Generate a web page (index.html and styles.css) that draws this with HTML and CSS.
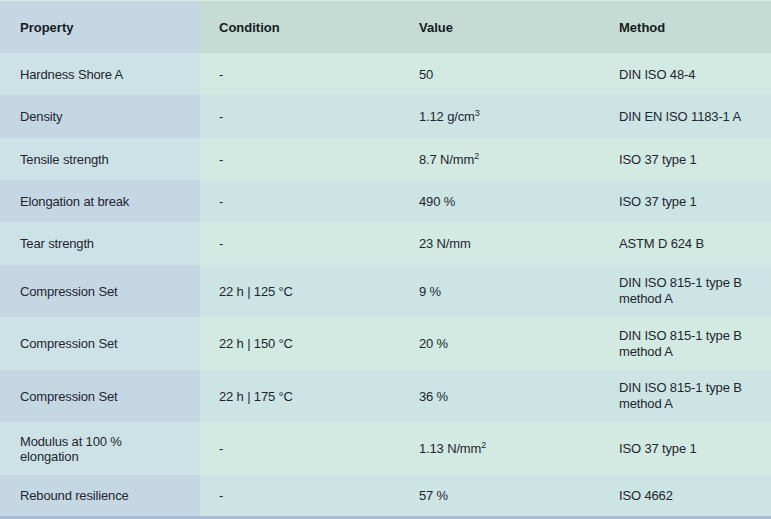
FILE: index.html
```html
<!DOCTYPE html>
<html lang="en">
<head>
<meta charset="utf-8">
<title>Properties</title>
<link rel="stylesheet" href="styles.css">
</head>
<body>
<table class="props">
  <colgroup>
    <col class="c1"><col class="c2"><col class="c3"><col class="c4">
  </colgroup>
  <thead>
    <tr class="head">
      <th>Property</th><th>Condition</th><th>Value</th><th>Method</th>
    </tr>
  </thead>
  <tbody>
    <tr class="odd r42"><td>Hardness Shore A</td><td>-</td><td>50</td><td>DIN ISO 48-4</td></tr>
    <tr class="even r43"><td>Density</td><td>-</td><td>1.12 g/cm<sup>3</sup></td><td>DIN EN ISO 1183-1 A</td></tr>
    <tr class="odd r42"><td>Tensile strength</td><td>-</td><td>8.7 N/mm<sup>2</sup></td><td>ISO 37 type 1</td></tr>
    <tr class="even r42"><td>Elongation at break</td><td>-</td><td>490 %</td><td>ISO 37 type 1</td></tr>
    <tr class="odd r43"><td>Tear strength</td><td>-</td><td>23 N/mm</td><td>ASTM D 624 B</td></tr>
    <tr class="even r52"><td>Compression Set</td><td>22 h | 125 °C</td><td>9 %</td><td class="two">DIN ISO 815-1 type B<br>method A</td></tr>
    <tr class="odd r53"><td>Compression Set</td><td>22 h | 150 °C</td><td>20 %</td><td class="two">DIN ISO 815-1 type B<br>method A</td></tr>
    <tr class="even r52"><td>Compression Set</td><td>22 h | 175 °C</td><td>36 %</td><td class="two">DIN ISO 815-1 type B<br>method A</td></tr>
    <tr class="odd r53"><td>Modulus at 100 %<br>elongation</td><td>-</td><td>1.13 N/mm<sup>2</sup></td><td>ISO 37 type 1</td></tr>
    <tr class="even r41"><td>Rebound resilience</td><td>-</td><td>57 %</td><td>ISO 4662</td></tr>
  </tbody>
</table>
</body>
</html>
```

FILE: styles.css
```css
html, body {
  margin: 0;
  padding: 0;
  background: #ffffff;
}

.props {
  width: 771px;
  table-layout: fixed;
  border-collapse: collapse;
  border-spacing: 0;
  font-family: "Liberation Sans", Arial, sans-serif;
  font-size: 13px;
  line-height: 15px;
  color: #1e2630;
  letter-spacing: -0.15px;
  border-top: 1px solid #d4e7e3;
  border-bottom: 3px solid #a9bcd6;
}

.c1, .c2, .c3 { width: 200px; }
.c4 { width: 171px; }

.props th,
.props td {
  padding: 0 8px 0 19px;
  text-align: left;
  vertical-align: middle;
}

.props th:first-child,
.props td:first-child {
  padding-left: 20px;
}

.props td.two { line-height: 16px; }

.head th {
  height: 52px;
  font-weight: bold;
  color: #161c22;
  background: #c4dcd3;
  letter-spacing: 0;
}
.head th:first-child { background: #c5d7e3; }

.odd td { background: #d2eae1; }
.odd td:first-child { background: #cde2e6; }
.even td { background: #cde4e4; }
.even td:first-child { background: #c5d7e3; }

.r41 td { height: 41px; }
.r42 td { height: 42px; }
.r43 td { height: 43px; }
.r52 td { height: 52px; }
.r53 td { height: 53px; }

.props sup {
  font-size: 9px;
  line-height: 0;
  vertical-align: 5px;
}
```
